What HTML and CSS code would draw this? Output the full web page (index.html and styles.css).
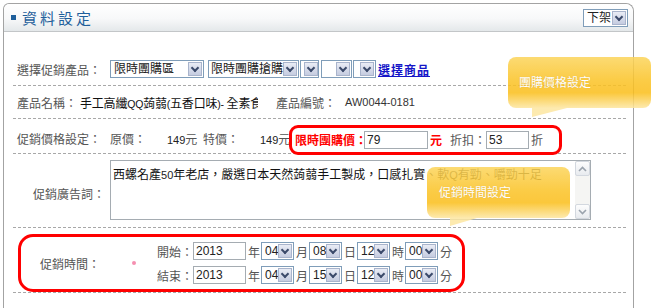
FILE: index.html
```html
<!DOCTYPE html>
<html lang="zh-Hant">
<head>
  <meta charset="UTF-8" />
  <title>資料設定</title>
  <link rel="stylesheet" href="styles.css">
</head>
<body>
  <div class="panel">
    <div class="panel-head">
      <span class="bullet"></span>
      <h1 class="title">資料設定</h1>
      <span class="sel sel-head"><span class="sel-text">下架</span><span class="sel-btn"></span></span>
    </div>

    <div class="panel-body">
      <div class="row row-product">
        <span class="label">選擇促銷產品：</span>
        <span class="sel sel-area"><span class="sel-text">限時團購區</span><span class="sel-btn"></span></span>
        <span class="sel sel-type"><span class="sel-text">限時團購搶購</span><span class="sel-btn"></span></span>
        <span class="sel sel-e1"><span class="sel-text"></span><span class="sel-btn"></span></span>
        <span class="sel sel-e2"><span class="sel-text"></span><span class="sel-btn"></span></span>
        <span class="sel sel-e3"><span class="sel-text"></span><span class="sel-btn"></span></span>
        <a href="#" class="pick">選擇商品</a>
      </div>

      <div class="row row-name">
        <span class="label-auto">產品名稱：</span>
        <span class="product-name">手工高纖<span class="latin">QQ</span>蒟蒻<span class="latin">(</span>五香口味<span class="latin">)- </span>全素食品</span>
        <span class="label-auto code-label">產品編號：</span>
        <span class="num code">AW0044-0181</span>
      </div>

      <div class="row row-price">
        <span class="label">促銷價格設定：</span>
        <span class="price-label">原價：</span>
        <span class="price-val"><span class="num">149</span>元</span>
        <span class="price-label">特價：</span>
        <span class="price-val price-last"><span class="num">149</span>元</span>
        <div class="highlight price-box">
          <span class="hot">限時團購價：</span>
          <input type="text" class="field field-price" value="79">
          <span class="hot unit">元</span>
          <span class="discount-label">折扣：</span>
          <input type="text" class="field field-discount" value="53">
          <span class="unit">折</span>
        </div>
      </div>

      <div class="row row-ad">
        <span class="label label-right">促銷廣告詞：</span>
        <div class="textarea">
          <div class="textarea-text">西螺名產<span class="num">50</span>年老店，嚴選日本天然蒟蒻手工製成，口感扎實、軟<span class="num">Q</span>有勁、嚼勁十足</div>
          <div class="scrollbar">
            <span class="scroll-btn"><svg width="9" height="6" viewBox="0 0 9 6"><polyline points="1,5 4.5,1.5 8,5" fill="none" stroke="#9aa3ad" stroke-width="1.6"/></svg></span>
            <span class="scroll-btn"><svg width="9" height="6" viewBox="0 0 9 6"><polyline points="1,1 4.5,4.5 8,1" fill="none" stroke="#9aa3ad" stroke-width="1.6"/></svg></span>
          </div>
        </div>
      </div>

      <div class="row row-time">
        <div class="highlight time-box">
          <span class="time-label">促銷時間：</span>
          <span class="dot"></span>
          <div class="time-lines">
            <div class="time-line">
              <span class="time-name">開始：</span>
              <input type="text" class="field field-year" value="2013">
              <span class="unit">年</span>
              <span class="sel sel-num"><span class="sel-text">04</span><span class="sel-btn"></span></span>
              <span class="unit">月</span>
              <span class="sel sel-num"><span class="sel-text">08</span><span class="sel-btn"></span></span>
              <span class="unit">日</span>
              <span class="sel sel-num"><span class="sel-text">12</span><span class="sel-btn"></span></span>
              <span class="unit">時</span>
              <span class="sel sel-num"><span class="sel-text">00</span><span class="sel-btn"></span></span>
              <span class="unit">分</span>
            </div>
            <div class="time-line">
              <span class="time-name">結束：</span>
              <input type="text" class="field field-year" value="2013">
              <span class="unit">年</span>
              <span class="sel sel-num"><span class="sel-text">04</span><span class="sel-btn"></span></span>
              <span class="unit">月</span>
              <span class="sel sel-num"><span class="sel-text">15</span><span class="sel-btn"></span></span>
              <span class="unit">日</span>
              <span class="sel sel-num"><span class="sel-text">12</span><span class="sel-btn"></span></span>
              <span class="unit">時</span>
              <span class="sel sel-num"><span class="sel-text">00</span><span class="sel-btn"></span></span>
              <span class="unit">分</span>
            </div>
          </div>
        </div>
      </div>
    </div>
  </div>

  <div class="tip tip-price">團購價格設定</div>
  <div class="tip tip-time">促銷時間設定</div>
</body>
</html>
```

FILE: styles.css
```css
html, body {
  overflow: hidden;
}
body {
  margin: 0;
  font-family: "Liberation Sans", "Noto Sans CJK TC", sans-serif;
  font-size: 12px;
  color: #555;
  background: #fff;
}
.num {
  font-size: 11px;
  color: #222;
}
.latin {
  font-size: 10.5px;
}

/* panel */
.panel {
  margin: 3px 0 0 3px;
  width: 631px;
  height: 305px;
  box-sizing: border-box;
  border: 1px solid #a3a3a3;
  border-bottom: none;
  border-radius: 6px 8px 0 0;
}
.panel-head {
  height: 28px;
  box-sizing: border-box;
  border-bottom: 1px solid #c3c6c8;
  border-radius: 6px 8px 0 0;
  background: linear-gradient(#ffffff, #f7f8f9 55%, #e4e8ea);
  display: flex;
  align-items: center;
  padding: 0 5px 0 7px;
}
.bullet {
  width: 5px;
  height: 5px;
  background: #1f5f9b;
  margin-right: 6px;
}
.title {
  margin: 0;
  font-size: 15px;
  font-weight: normal;
  letter-spacing: 3px;
  color: #1f5f9b;
}
.sel-head {
  margin-left: auto;
  width: 45px;
}
.sel-head .sel-text {
  color: #222;
  padding-left: 2px;
}

/* fake select boxes */
.sel {
  display: inline-flex;
  box-sizing: border-box;
  height: 18px;
  border: 1px solid #7f9db9;
  background: #fff;
  padding: 1px;
  flex-shrink: 0;
}
.sel-text {
  flex: 1;
  line-height: 14px;
  padding-left: 2px;
  color: #222;
  white-space: nowrap;
  overflow: hidden;
}
.sel-btn {
  width: 14px;
  flex-shrink: 0;
  box-sizing: border-box;
  border: 1px solid #a9b4cc;
  background: linear-gradient(#e9ecf5, #c5cce0);
  position: relative;
}
.sel-btn::after {
  content: "";
  position: absolute;
  left: 3px;
  top: 2px;
  width: 4px;
  height: 4px;
  border-right: 2px solid #3b4a6b;
  border-bottom: 2px solid #3b4a6b;
  transform: rotate(45deg);
}

/* rows */
.panel-body {
  padding: 21px 7px 0 9px;
}
.row {
  display: flex;
  align-items: center;
  box-sizing: border-box;
  border-bottom: 1px dashed #a8a8a8;
  padding-left: 4px;
  white-space: nowrap;
}
.label {
  width: 93px;
  flex-shrink: 0;
}
.label-right {
  text-align: right;
  width: 88px;
  padding-right: 5px;
}
.row-product {
  height: 33px;
}
.sel-area {
  width: 94px;
}
.sel-type {
  width: 91px;
  margin-left: 4px;
}
.sel-type .sel-text {
  padding-left: 1px;
}
.sel-e1 {
  width: 19px;
  margin-left: 1px;
}
.sel-e2 {
  width: 31px;
  margin-left: 2px;
}
.sel-e3 {
  width: 23px;
  margin-left: 1px;
}
.pick {
  margin-left: 2px;
  color: #1515c8;
  font-weight: bold;
  letter-spacing: 1px;
}

.row-name {
  height: 33px;
}
.product-name {
  margin-left: 3px;
  width: 178px;
  flex-shrink: 0;
  overflow: hidden;
  color: #111;
  letter-spacing: -0.2px;
}
.code-label {
  margin-left: 18px;
}
.code {
  margin-left: 9px;
  color: #333;
}

.row-price {
  height: 35px;
  padding-top: 5px;
}
.price-label {
  width: 57px;
  flex-shrink: 0;
}
.price-val {
  width: 36px;
  flex-shrink: 0;
}
.price-last {
  width: 29px;
}
.highlight {
  border: 3px solid #f00;
  background: #fff;
  box-sizing: border-box;
  display: flex;
  align-items: center;
}
.price-box {
  height: 30px;
  margin-bottom: -2px;
  border-radius: 9px;
  padding: 0 15px 0 3px;
  position: relative;
  flex-shrink: 0;
}
.hot {
  color: #f00;
  font-weight: bold;
}
.field {
  box-sizing: border-box;
  height: 18px;
  border: 1px solid #a5acb2;
  font-family: "Liberation Sans", sans-serif;
  font-size: 12px;
  color: #222;
  padding: 0 2px;
  margin: 0;
}
.field-price {
  width: 64px;
  margin-left: -3px;
}
.field-discount {
  width: 43px;
}
.unit {
  margin: 0 1px 0 2px;
}
.hot.unit {
  margin-right: 8px;
}

.row-ad {
  height: 74px;
  padding-top: 6px;
}
.textarea {
  width: 481px;
  height: 60px;
  box-sizing: border-box;
  border: 1px solid #a5acb2;
  display: flex;
  align-self: flex-start;
}
.textarea-text {
  flex: 1;
  padding: 4px 2px;
  color: #111;
}
.scrollbar {
  width: 15px;
  background: #f5f5f3;
  display: flex;
  flex-direction: column;
  justify-content: space-between;
}
.scroll-btn {
  height: 15px;
  box-sizing: border-box;
  border: 1px solid #d3d8df;
  border-radius: 2px;
  background: linear-gradient(#fdfdfd, #e8ebef);
  display: flex;
  align-items: center;
  justify-content: center;
}

.row-time {
  height: 65px;
  padding: 6px 0 0 0;
}
.time-box {
  width: 447px;
  height: 58px;
  margin-left: 5px;
  border-radius: 15px;
  padding-left: 19px;
}
.time-label {
  width: 60px;
}
.dot {
  width: 4px;
  height: 4px;
  border-radius: 50%;
  background: #f58fb0;
  margin: 0 21px 0 32px;
}
.time-lines {
  display: flex;
  flex-direction: column;
  gap: 6px;
}
.time-line {
  display: flex;
  align-items: center;
}
.time-name {
  width: 36px;
}
.field-year {
  width: 53px;
}
.sel-num {
  width: 33px;
}

/* callouts */
.tip {
  position: absolute;
  height: 51px;
  width: 143px;
  box-sizing: border-box;
  border-radius: 8px;
  background: linear-gradient(#fcd55c, #fbc429 45%, #fbbf1c 70%, #fde7a2);
  opacity: 0.86;
  color: #fff;
  line-height: 53px;
  padding-left: 12px;
  text-shadow: 0 0 1px rgba(160, 110, 0, 0.4);
}
.tip::after {
  content: "";
  position: absolute;
  top: 100%;
  background: #fde7a2;
  clip-path: polygon(0 0, 100% 0, 0 100%);
}
.tip-price {
  left: 508px;
  top: 57px;
  padding-left: 11px;
}
.tip-price::after {
  left: 24px;
  width: 35px;
  height: 9px;
}
.tip-time {
  left: 427px;
  top: 167px;
}
.tip-time::after {
  left: 23px;
  width: 27px;
  height: 8px;
}
```
